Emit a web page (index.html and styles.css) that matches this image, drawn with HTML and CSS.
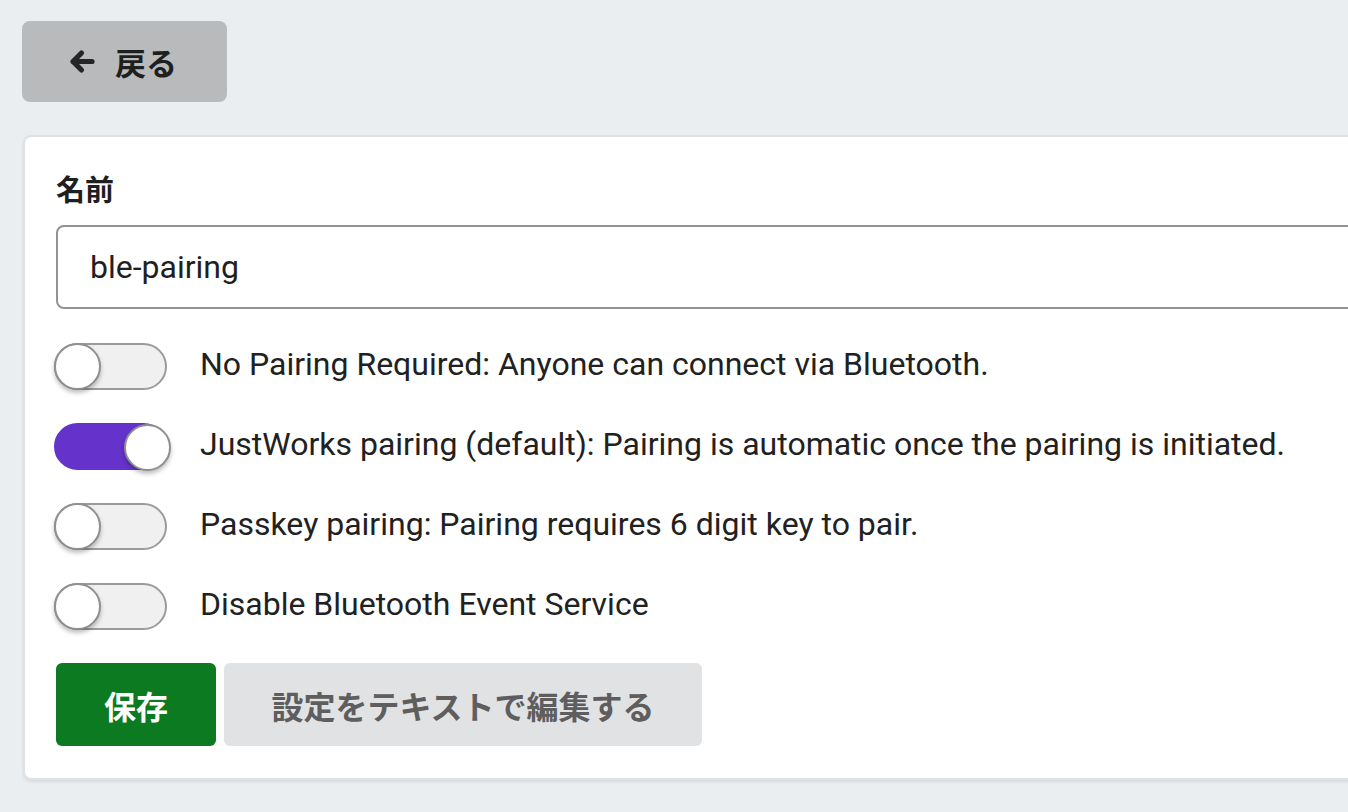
FILE: index.html
```html
<!DOCTYPE html>
<html lang="ja">
<head>
<meta charset="utf-8">
<title>ble-pairing</title>
<link rel="stylesheet" href="styles.css">
</head>
<body>
<div class="page">
  <button class="back-btn" type="button">
    <svg class="back-icon" viewBox="0 0 27 25" width="27" height="25" aria-hidden="true">
      <path d="M24 12.5H5M13.5 4L5 12.5L13.5 21" fill="none" stroke="#262626" stroke-width="5.2" stroke-linecap="round" stroke-linejoin="round"/>
    </svg>
    <span>戻る</span>
  </button>

  <div class="card">
    <label class="field-label" for="name">名前</label>
    <input id="name" class="text-input" type="text" value="ble-pairing">

    <div class="toggle-list">
      <div class="toggle-row">
        <span class="toggle"><span class="knob"></span></span>
        <span class="toggle-label">No Pairing Required: Anyone can connect via Bluetooth.</span>
      </div>
      <div class="toggle-row">
        <span class="toggle on"><span class="knob"></span></span>
        <span class="toggle-label">JustWorks pairing (default): Pairing is automatic once the pairing is initiated.</span>
      </div>
      <div class="toggle-row">
        <span class="toggle"><span class="knob"></span></span>
        <span class="toggle-label">Passkey pairing: Pairing requires 6 digit key to pair.</span>
      </div>
      <div class="toggle-row">
        <span class="toggle"><span class="knob"></span></span>
        <span class="toggle-label">Disable Bluetooth Event Service</span>
      </div>
    </div>

    <div class="actions">
      <button class="btn btn-save" type="button">保存</button>
      <button class="btn btn-edit" type="button">設定をテキストで編集する</button>
    </div>
  </div>
</div>
</body>
</html>
```

FILE: styles.css
```css
html, body {
  margin: 0;
  padding: 0;
  background: #ebeef0;
  overflow: hidden;
}

body {
  font-family: Roboto, "Noto Sans CJK JP", sans-serif;
  color: #212121;
  width: 1348px;
  height: 812px;
}

.page {
  padding: 21px 0 0 22px;
  width: 1420px;
}

.back-btn {
  display: flex;
  align-items: center;
  justify-content: center;
  gap: 20px;
  width: 205px;
  height: 81px;
  border: none;
  border-radius: 8px;
  background: #b9babc;
  font-family: Roboto, "Noto Sans CJK JP", sans-serif;
  font-weight: 700;
  font-size: 31px;
  color: #1f1f1f;
  padding: 0 4px 0 0;
  cursor: pointer;
}

.back-icon {
  display: block;
}

.card {
  margin: 33px 0 0 1px;
  background: #ffffff;
  border: 2px solid #dfe1e2;
  border-radius: 8px;
  box-shadow: 0 2px 3px rgba(0, 0, 0, 0.08);
  padding: 34px 32px 32px 31px;
  display: flex;
  flex-direction: column;
}

.field-label {
  font-family: "Noto Sans CJK JP", sans-serif;
  font-weight: 700;
  font-size: 29px;
  line-height: 34px;
  color: #1f1f1f;
}

.text-input {
  margin-top: 20px;
  height: 84px;
  box-sizing: border-box;
  border: 2px solid #939396;
  border-radius: 8px;
  padding: 0 32px;
  font-family: Roboto, sans-serif;
  font-size: 32px;
  color: #1f1f1f;
  background: #fff;
  outline: none;
}

.toggle-list {
  display: flex;
  flex-direction: column;
  gap: 33px;
  margin-top: 34px;
}

.toggle-row {
  display: flex;
  align-items: center;
  gap: 33px;
  height: 47px;
  margin-left: -2px;
}

.toggle {
  position: relative;
  flex: none;
  width: 113px;
  height: 47px;
  box-sizing: border-box;
  border: 2px solid #9b9b9b;
  border-radius: 24px;
  background: #f0f0f0;
}

.toggle .knob {
  position: absolute;
  top: -2px;
  left: -2px;
  width: 47px;
  height: 47px;
  box-sizing: border-box;
  border-radius: 50%;
  background: #ffffff;
  border: 2px solid #8f8f8f;
  box-shadow: 0 3px 4px rgba(0, 0, 0, 0.25);
}

.toggle.on {
  background: #6632cc;
  border-color: #6632cc;
}

.toggle.on .knob {
  left: auto;
  right: -6px;
  top: -1px;
}

.toggle-label {
  font-family: Roboto, sans-serif;
  font-size: 32px;
  color: #212121;
  white-space: nowrap;
  padding-bottom: 5px;
}

.actions {
  display: flex;
  gap: 8px;
  margin-top: 33px;
}

.btn {
  height: 83px;
  border: none;
  border-radius: 6px;
  font-family: "Noto Sans CJK JP", sans-serif;
  font-weight: 700;
  font-size: 32px;
  padding: 0;
  cursor: pointer;
}

.btn-save {
  width: 160px;
  background: #0b7a20;
  color: #ffffff;
}

.btn-edit {
  width: 478px;
  background: #e1e2e4;
  color: #5e5e5e;
}
```
